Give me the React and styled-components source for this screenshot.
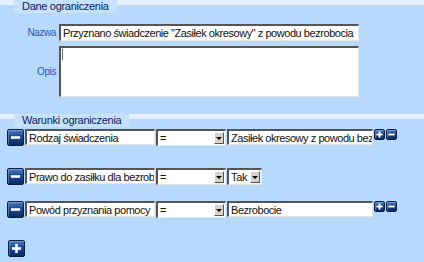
import React from "react";
import styled, { createGlobalStyle } from "styled-components";

const GlobalStyle = createGlobalStyle`
  html, body {
    margin: 0;
    padding: 0;
    background: #b7d9fb;
  }
  body {
    font-family: "Liberation Sans", Arial, sans-serif;
  }
`;

const Page = styled.div`
  width: 424px;
  height: 262px;
  background: #b7d9fb;
  overflow: hidden;
`;

const Section = styled.div`
  display: flex;
  flex-direction: column;
  margin-top: ${(p) => p.$top || 0}px;
`;

const Legend = styled.div`
  display: flex;
  align-items: flex-start;
  height: 13px;
`;

const Band = styled.div`
  width: ${(p) => p.$width}px;
  height: 5px;
  background: #e4f1fd;
  flex: ${(p) => (p.$grow ? 1 : "none")};
`;

const Tab = styled.div`
  height: 13px;
  padding: 0 8px;
  display: flex;
  align-items: center;
  background: #c6e2fb;
  color: #08205e;
  font-size: 11px;
  letter-spacing: -0.3px;
  line-height: 13px;
  white-space: nowrap;
`;

const Form = styled.div`
  display: grid;
  grid-template-columns: 56px 300px;
  column-gap: 3px;
  row-gap: 5px;
  margin-top: 11px;
`;

const Label = styled.div`
  color: #2a55b5;
  font-size: 10px;
  letter-spacing: -0.4px;
  text-align: right;
  align-self: center;
`;

const fieldBorder = `
  border-top: 2px solid #555;
  border-left: 2px solid #555;
  border-right: 1px solid #e6e6e6;
  border-bottom: 1px solid #e6e6e6;
  background: #fff;
  box-sizing: border-box;
`;

const TextField = styled.div`
  ${fieldBorder}
  width: ${(p) => p.$width}px;
  height: ${(p) => p.$height || 17}px;
  padding: 0 2px;
  font-size: 11px;
  letter-spacing: -0.45px;
  line-height: 14px;
  color: #111;
  white-space: nowrap;
  overflow: hidden;
`;

const Area = styled.div`
  ${fieldBorder}
  width: 300px;
  height: 51px;
`;

const Caret = styled.div`
  width: 1px;
  height: 11px;
  margin: 1px 0 0 1px;
  background: #666;
`;

const Rows = styled.div`
  display: flex;
  flex-direction: column;
  margin-top: 2px;
  padding-left: 7px;
`;

const Row = styled.div`
  display: flex;
  align-items: flex-start;
  gap: 1px;
  margin-top: ${(p) => p.$top}px;
`;

const Select = styled.div`
  ${fieldBorder}
  width: ${(p) => p.$width}px;
  height: 17px;
  display: flex;
  align-items: stretch;
  font-size: 11px;
  letter-spacing: -0.3px;
  color: #111;
`;

const SelectValue = styled.div`
  flex: 1;
  padding: 0 2px;
  line-height: 14px;
  white-space: nowrap;
`;

const DropButton = styled.div`
  width: 10px;
  margin: 1px;
  background: #d6d3ce;
  border-top: 1px solid #fff;
  border-left: 1px solid #fff;
  border-right: 1px solid #555;
  border-bottom: 1px solid #555;
  display: flex;
  align-items: center;
  justify-content: center;
  box-sizing: border-box;
  flex: none;

  &::after {
    content: "";
    border-left: 3px solid transparent;
    border-right: 3px solid transparent;
    border-top: 3px solid #000;
  }
`;

const IconButton = styled.button`
  width: ${(p) => p.$size}px;
  height: ${(p) => p.$size}px;
  padding: 0;
  margin: 0;
  border: 1px solid #081d45;
  border-radius: 2px;
  background: linear-gradient(180deg, #4a7cc2 0%, #1f4d94 40%, #0c2a5e 100%);
  box-shadow: inset 1px 1px 0 rgba(255, 255, 255, 0.25);
  display: flex;
  align-items: center;
  justify-content: center;
  box-sizing: border-box;
  flex: none;

  svg {
    display: block;
  }
`;

const SmallButtons = styled.div`
  display: flex;
  gap: 1px;
`;

const AddRow = styled.div`
  margin-top: 22px;
  padding-left: 1px;
`;

const Plus = ({ s }) => (
  <svg width={s} height={s} viewBox="0 0 10 10">
    <rect x="1.5" y="4" width="7" height="2" fill="#fff" />
    <rect x="4" y="1.5" width="2" height="7" fill="#fff" />
  </svg>
);

const Minus = ({ s }) => (
  <svg width={s} height={s} viewBox="0 0 10 10">
    <rect x="1.5" y="4" width="7" height="2" fill="#fff" />
  </svg>
);

const conditions = [
  { top: 0, field: "Rodzaj świadczenia", value: "Zasiłek okresowy z powodu bezrobocia", kind: "text" },
  { top: 22, field: "Prawo do zasiłku dla bezrobotnych", value: "Tak", kind: "select" },
  { top: 16, field: "Powód przyznania pomocy", value: "Bezrobocie", kind: "text" },
];

const ConditionRow = ({ top, field, value, kind }) => (
  <Row $top={top}>
    <IconButton $size={17}>
      <Minus s={13} />
    </IconButton>
    <TextField $width={130} $height={16}>{field}</TextField>
    <Select $width={70}>
      <SelectValue>=</SelectValue>
      <DropButton />
    </Select>
    {kind === "select" ? (
      <Select $width={35}>
        <SelectValue>{value}</SelectValue>
        <DropButton />
      </Select>
    ) : (
      <>
        <TextField $width={146} $height={16}>{value}</TextField>
        <SmallButtons>
          <IconButton $size={11}>
            <Plus s={9} />
          </IconButton>
          <IconButton $size={11}>
            <Minus s={9} />
          </IconButton>
        </SmallButtons>
      </>
    )}
  </Row>
);

export default function App() {
  return (
    <Page>
      <GlobalStyle />
      <Section>
        <Legend>
          <Band $width={14} />
          <Tab>Dane ograniczenia</Tab>
          <Band $grow />
        </Legend>
        <Form>
          <Label>Nazwa</Label>
          <TextField $width={300}>
            Przyznano świadczenie "Zasiłek okresowy" z powodu bezrobocia
          </TextField>
          <Label>Opis</Label>
          <Area>
            <Caret />
          </Area>
        </Form>
      </Section>
      <Section $top={17}>
        <Legend>
          <Band $width={14} />
          <Tab>Warunki ograniczenia</Tab>
          <Band $grow />
        </Legend>
        <Rows>
          {conditions.map((c) => (
            <ConditionRow key={c.field} {...c} />
          ))}
          <AddRow>
            <IconButton $size={17}>
              <Plus s={13} />
            </IconButton>
          </AddRow>
        </Rows>
      </Section>
    </Page>
  );
}
